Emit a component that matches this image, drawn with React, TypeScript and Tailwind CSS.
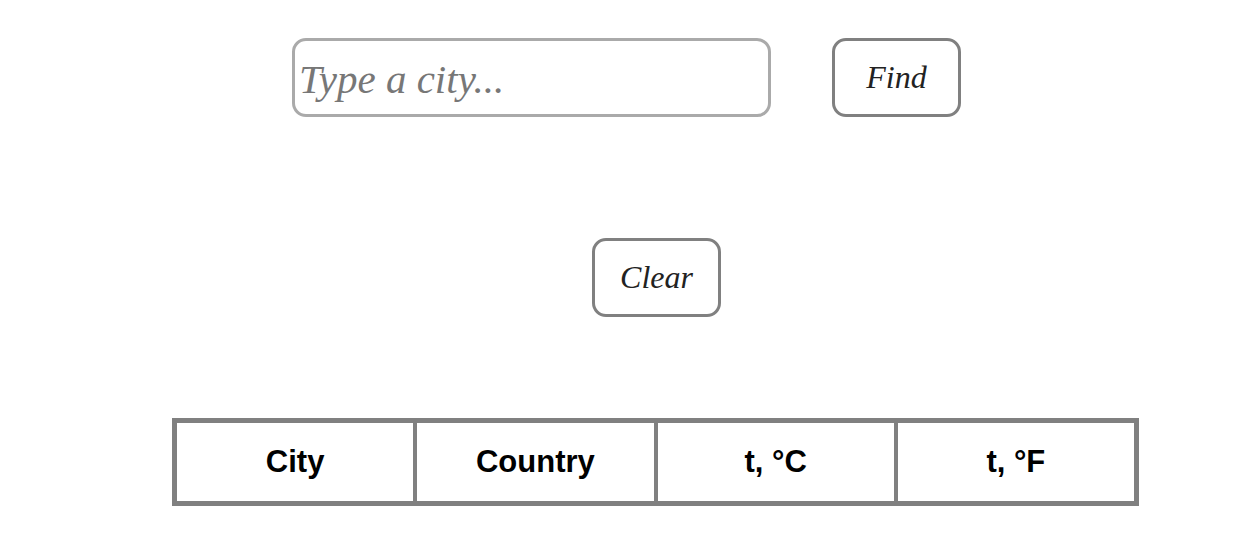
import { useState } from "react";

const script = "font-['Liberation_Serif',serif] italic";

export default function App() {
  const [city, setCity] = useState("");

  return (
    <div className="min-h-screen w-full bg-white">
      <div className="flex items-center gap-[61px] pl-[292px] pt-[38px]">
        <input
          value={city}
          onChange={(e) => setCity(e.target.value)}
          placeholder="Type a city..."
          className={`h-[79px] w-[479px] rounded-[14px] border-[3px] border-[#aaaaaa] px-[4px] pt-[2px] text-[41px] text-[#555] outline-none placeholder:text-[#777] ${script}`}
        />
        <button
          className={`h-[79px] w-[129px] rounded-[14px] border-[3px] border-[#808080] bg-white pb-[2px] text-[32px] text-[#222] ${script}`}
        >
          Find
        </button>
      </div>

      <div className="mt-[121px] pl-[592px]">
        <button
          className={`h-[79px] w-[129px] rounded-[14px] border-[3px] border-[#808080] bg-white pb-[2px] text-[32px] text-[#222] ${script}`}
          onClick={() => setCity("")}
        >
          Clear
        </button>
      </div>

      <div className="ml-[172px] mt-[101px] flex h-[88px] w-[967px] border-[5px] border-[#808080] font-['Liberation_Sans',Arial,sans-serif] text-[31px] font-bold text-black">
        {["City", "Country", "t, °C", "t, °F"].map((h, i) => (
          <div
            key={h}
            className={`flex flex-1 items-center justify-center ${i > 0 ? "border-l-[4px] border-[#808080]" : ""}`}
          >
            {h}
          </div>
        ))}
      </div>
    </div>
  );
}
